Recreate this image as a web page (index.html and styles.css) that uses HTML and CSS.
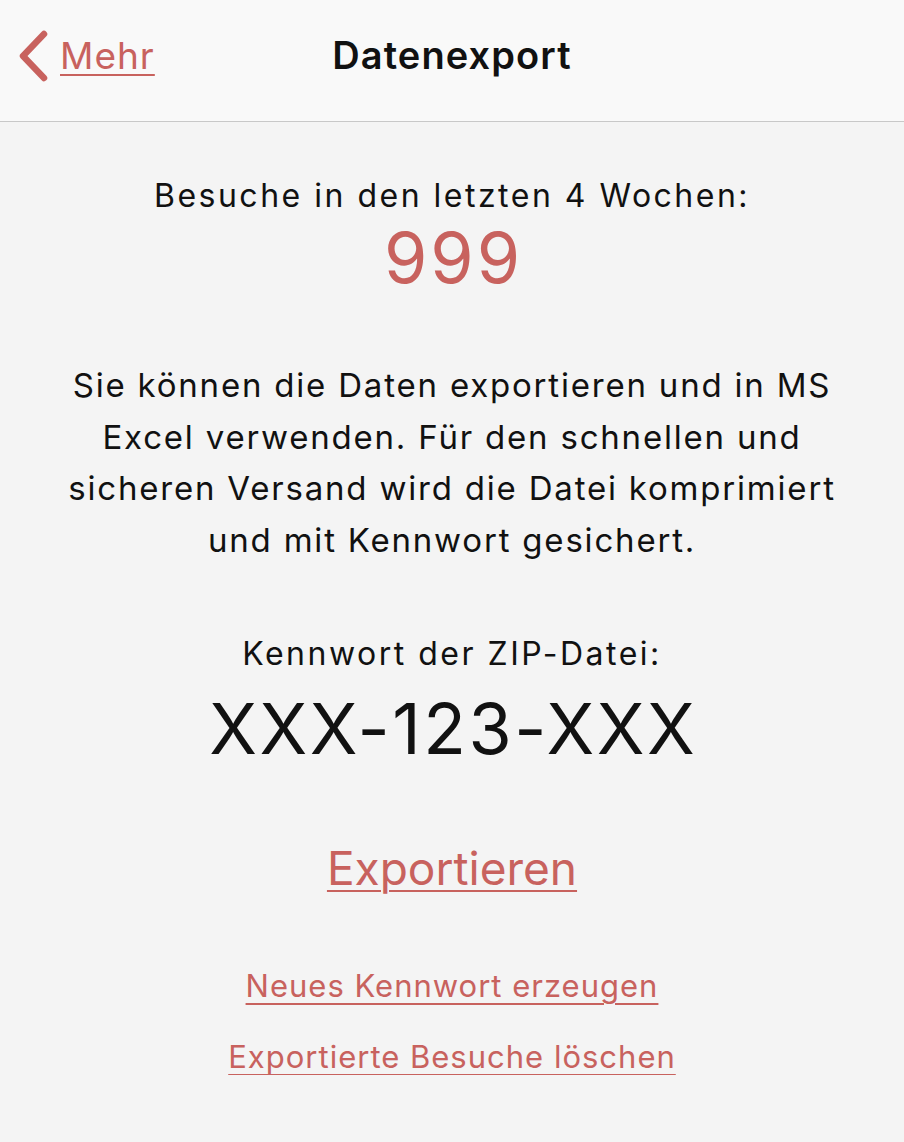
FILE: index.html
```html
<!DOCTYPE html>
<html lang="de">
<head>
  <meta charset="UTF-8">
  <meta name="viewport" content="width=device-width, initial-scale=1.0">
  <title>Datenexport</title>
  <link rel="stylesheet" href="styles.css">
</head>
<body>
  <header class="nav-bar">
    <a class="back-link" href="#">
      <svg class="back-icon" width="30" height="52" viewBox="0 0 30 52">
        <path d="M26 4 L5 26 L26 48" fill="none" stroke="#c8625e" stroke-width="6.5" stroke-linecap="round" stroke-linejoin="round"/>
      </svg>
      <span class="back-text">Mehr</span>
    </a>
    <h1 class="nav-title">Datenexport</h1>
    <div></div>
  </header>

  <main class="content">
    <section class="visits">
      <div class="label">Besuche in den letzten 4 Wochen:</div>
      <div class="visit-count">999</div>
    </section>

    <p class="info">Sie können die Daten exportieren und in MS Excel verwenden. Für den schnellen und sicheren Versand wird die Datei komprimiert und mit Kennwort gesichert.</p>

    <section class="password">
      <div class="label">Kennwort der ZIP-Datei:</div>
      <div class="password-value">XXX-123-XXX</div>
    </section>

    <a class="export-link" href="#">Exportieren</a>

    <div class="actions">
      <a class="action-link" href="#">Neues Kennwort erzeugen</a>
      <a class="action-link" href="#">Exportierte Besuche löschen</a>
    </div>
  </main>
</body>
</html>
```

FILE: styles.css
```css
body {
  margin: 0;
  padding: 0;
  font-family: Inter, "Noto Sans", sans-serif;
  background-color: #f4f4f4;
  color: #111;
}

a {
  color: #c8625e;
  text-decoration: underline;
  text-decoration-thickness: 2px;
  text-underline-offset: 5px;
}

/* top bar: back link | title | empty column */
.nav-bar {
  height: 121px;
  background-color: #f9f9f9;
  border-bottom: 1px solid #c8c8c8;
  display: grid;
  grid-template-columns: 1fr auto 1fr;
  align-items: center;
}

.back-link {
  justify-self: start;
  display: flex;
  align-items: center;
  gap: 12px;
  padding-left: 18px;
  margin-bottom: 10px;
}

.back-icon {
  display: block;
}

.back-text {
  font-size: 37px;
  letter-spacing: 1px;
}

.nav-title {
  margin: 0 0 12px;
  font-size: 38px;
  font-weight: 600;
  letter-spacing: 1.1px;
  color: #111;
}

.content {
  display: flex;
  flex-direction: column;
  align-items: center;
  text-align: center;
  padding: 0 52px;
}

.visits {
  margin-top: 52px;
}

.label {
  font-size: 32px;
  letter-spacing: 2.5px;
  line-height: 44px;
}

.visit-count {
  font-size: 70px;
  line-height: 80px;
  letter-spacing: 3px;
  padding-left: 3px;
  color: #c8625e;
}

.info {
  margin: 62px 0 0;
  font-size: 33px;
  letter-spacing: 1.8px;
  line-height: 51.5px;
}

.password {
  margin-top: 66px;
}

.password-value {
  font-size: 70px;
  line-height: 105px;
  letter-spacing: 2.5px;
  padding-left: 2.5px;
}

.export-link {
  margin-top: 59px;
  font-size: 46px;
}

.actions {
  margin-top: 71px;
  display: flex;
  flex-direction: column;
  align-items: center;
  gap: 34px;
}

.action-link {
  font-size: 31px;
  letter-spacing: 1px;
  text-underline-offset: 6px;
}
```
